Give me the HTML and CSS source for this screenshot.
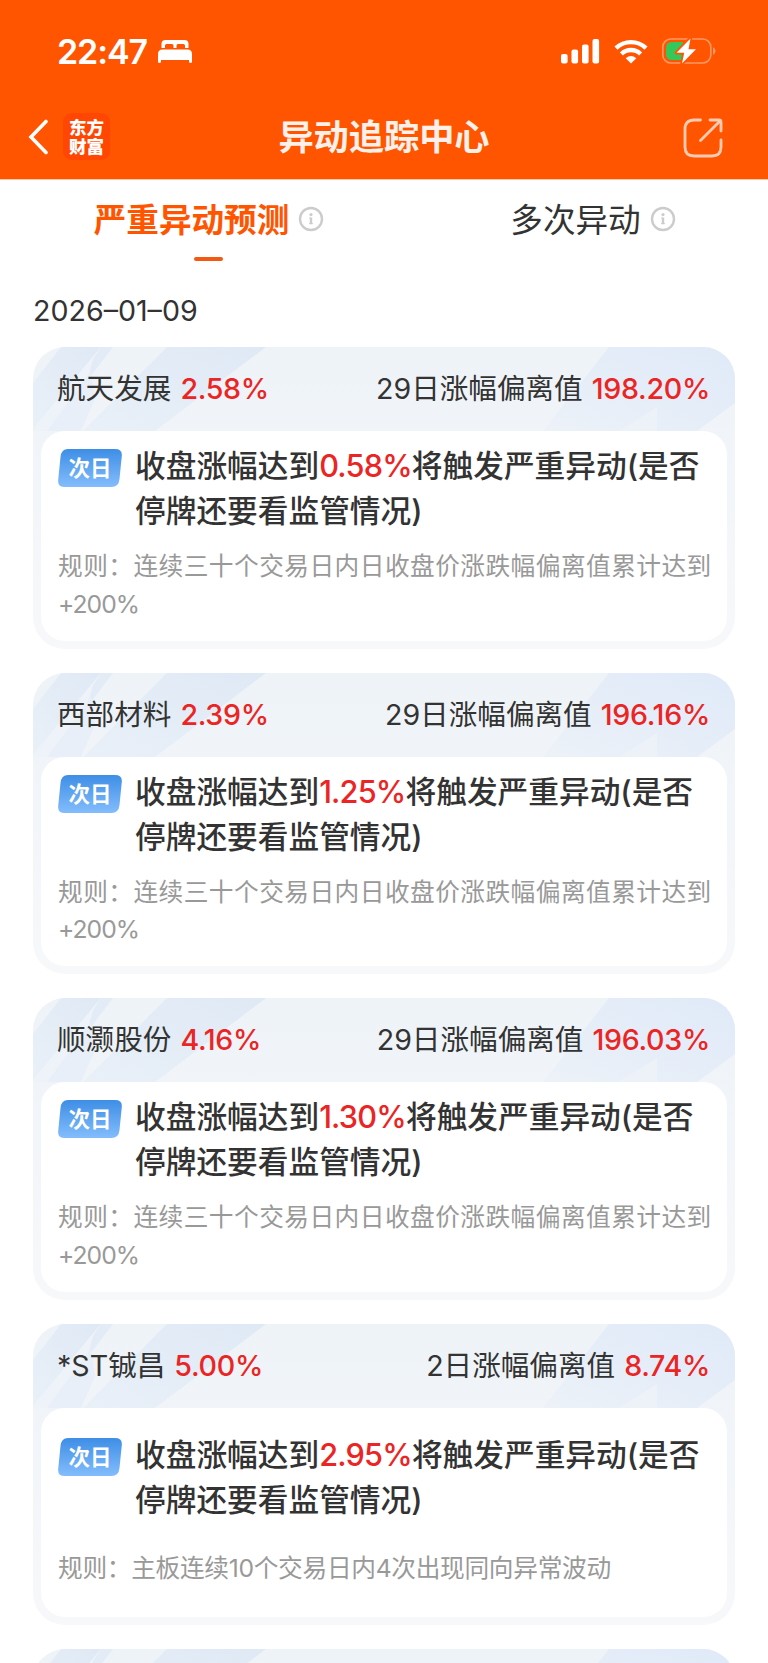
FILE: index.html
```html
<!DOCTYPE html>
<html lang="zh-CN">

<head>
    <meta charset="UTF-8">
    <meta name="viewport" content="width=device-width, initial-scale=1.0">
    <title>异动追踪中心</title>
    <link rel="stylesheet" href="styles.css">
</head>

<body>
    <svg class="defs" width="0" height="0">
        <symbol id="info" viewBox="0 0 26 26">
            <circle cx="13" cy="13" r="11" fill="none" stroke="#cccccc" stroke-width="2.4" />
            <circle cx="13" cy="8.6" r="1.6" fill="#cccccc" />
            <path d="M13 11.600V18" fill="none" stroke="#cccccc" stroke-width="2.400" />
            <path d="M11.400 12.200H13M11.200 17.600H14.800" fill="none" stroke="#cccccc" stroke-width="1.200" />
        </symbol>
        <symbol id="card-bg" viewBox="0 0 702 110">
            <linearGradient id="band-left" x1="1" y1="0" x2="0" y2="1">
                <stop offset="0" stop-color="#dfe9f5" />
                <stop offset="1" stop-color="#e9f0f8" />
            </linearGradient>
            <linearGradient id="band-right" x1="1" y1="0" x2="0" y2="1">
                <stop offset="0" stop-color="#e0eaf8" />
                <stop offset=".5" stop-color="#e5edf8" />
                <stop offset="1" stop-color="#edf2f8" />
            </linearGradient>
            <path d="M28 0H68L0 82V36Z" fill="url(#band-left)" />
            <path d="M68 0L58 24L14 84H0V82Z" fill="#eef3f9" />
            <path d="M68 0H80L54 34L60 12Z" fill="#e2ebf6" />
            <path d="M58 24L14 84H48L62 52Z" fill="#e8eff8" />
            <path d="M134 0H233L122 84H50Z" fill="url(#band-left)" />
            <path d="M576 0H702V56L664 84H510Z" fill="url(#band-right)" />
            <path d="M624 60V84H586Z" fill="#edf2f8" />
        </symbol>
        <symbol id="badge" viewBox="0 0 64 38">
            <linearGradient id="badge-fill" x1="0" y1="0" x2="0" y2="1">
                <stop offset="0" stop-color="#3e8ee6" />
                <stop offset="1" stop-color="#83bdfc" />
            </linearGradient>
            <path d="M10 0H57Q64.500 0 63.800 7L61.500 30Q60.700 38 53.500 38H7Q-.5 38 .2 31L2.500 8Q3.300 0 10 0Z" fill="url(#badge-fill)" />
        </symbol>
    </svg>

    <header class="header">
        <div class="status-bar">
            <div class="status-left">
                <span class="time">22:47</span>
                <svg width="34" height="23" viewBox="0 0 34 23" fill="#fff">
                    <path d="M3.500 8V4Q3.500 0 7.500 0H26.500Q30.500 0 30.500 4V8H27V5.500Q27 4 25.500 4H20Q18.500 4 18.500 5.500V8H15.500V5.500Q15.500 4 14 4H8.500Q7 4 7 5.500V8Z" />
                    <path d="M0 14Q0 9.500 4.500 9.500H29.500Q34 9.500 34 14V21.500Q34 23 32.500 23T31 21.500V20H3V21.500Q3 23 1.500 23T0 21.500Z" />
                </svg>
            </div>
            <div class="status-right">
                <svg width="39" height="25" viewBox="0 0 39 25" fill="#fff">
                    <rect x="0" y="15" width="6.600" height="9.500" rx="2" />
                    <rect x="10.500" y="10.500" width="6.600" height="14" rx="2" />
                    <rect x="21" y="5.500" width="6.600" height="19" rx="2" />
                    <rect x="31.500" y="0" width="6.600" height="24.500" rx="2" />
                </svg>
                <svg class="wifi" width="34" height="25" viewBox="0 0 34 25" fill="none" stroke="#fff" stroke-width="4.400">
                    <path d="M2 9.200A21.500 21.500 0 0 1 32 9.200" />
                    <path d="M7.400 15A13.700 13.700 0 0 1 26.600 15" />
                    <path d="M17 24.500L11.700 19.300Q17 14.800 22.300 19.300Z" fill="#fff" stroke="none" />
                </svg>
                <svg class="battery" width="54" height="28" viewBox="0 0 54 28">
                    <rect x=".8" y="2" width="48" height="24" rx="8" fill="none" stroke="#ff9966" stroke-width="1.600" />
                    <path d="M51 10Q53.500 11.500 53.500 14T51 18Z" fill="#ff9966" />
                    <path d="M10 5H21V23H10Q4 23 4 17V11Q4 5 10 5Z" fill="#34c759" />
                    <path d="M28.500 1.500L14.500 15.800H22.200L20 26.500L34 12.200H26.500Z" fill="#fff" stroke="#ff5500" stroke-width="3.500" stroke-linejoin="round" paint-order="stroke" />
                </svg>
            </div>
        </div>
        <div class="nav-bar">
            <div class="nav-left">
                <svg width="20" height="36" viewBox="0 0 20 36" fill="none" stroke="#fff" stroke-width="3.600" stroke-linecap="round">
                    <path d="M18 2.500L3 18L18 33.500" />
                </svg>
                <div class="logo">东方<br>财富</div>
            </div>
            <h1 class="nav-title">异动追踪中心</h1>
            <svg class="share" width="40" height="40" viewBox="0 0 40 40" fill="none" stroke="#ffccb3" stroke-width="2.800" stroke-linecap="round">
                <path d="M17.500 2H11Q2 2 2 11V29Q2 38 11 38H29Q38 38 38 29V22" />
                <path d="M27 2H36Q38 2 38 4V13M37 3L17.500 22.500" />
            </svg>
        </div>
    </header>

    <nav class="tabs">
        <div class="tab active">
            <span>严重异动预测</span>
            <svg class="info"><use href="#info" /></svg>
        </div>
        <div class="tab">
            <span>多次异动</span>
            <svg class="info"><use href="#info" /></svg>
        </div>
    </nav>

    <main class="content">
        <div class="date">2026–01–09</div>

        <section class="card">
            <svg class="card-bg"><use href="#card-bg" /></svg>
            <div class="card-head">
                <div>航天发展<span class="rate">2.58%</span></div>
                <div>29日涨幅偏离值<span class="rate">198.20%</span></div>
            </div>
            <div class="card-body">
                <div class="notice">
                    <div class="badge"><svg><use href="#badge" /></svg><span>次日</span></div>
                    <p>收盘涨幅达到<b>0.58%</b>将触发严重异动(是否停牌还要看监管情况)</p>
                </div>
                <p class="rule">规则：连续三十个交易日内日收盘价涨跌幅偏离值累计达到<span>+200%</span></p>
            </div>
        </section>

        <section class="card">
            <svg class="card-bg"><use href="#card-bg" /></svg>
            <div class="card-head">
                <div>西部材料<span class="rate">2.39%</span></div>
                <div>29日涨幅偏离值<span class="rate">196.16%</span></div>
            </div>
            <div class="card-body">
                <div class="notice">
                    <div class="badge"><svg><use href="#badge" /></svg><span>次日</span></div>
                    <p>收盘涨幅达到<b>1.25%</b>将触发严重异动(是否停牌还要看监管情况)</p>
                </div>
                <p class="rule">规则：连续三十个交易日内日收盘价涨跌幅偏离值累计达到<span>+200%</span></p>
            </div>
        </section>

        <section class="card">
            <svg class="card-bg"><use href="#card-bg" /></svg>
            <div class="card-head">
                <div>顺灏股份<span class="rate">4.16%</span></div>
                <div>29日涨幅偏离值<span class="rate">196.03%</span></div>
            </div>
            <div class="card-body">
                <div class="notice">
                    <div class="badge"><svg><use href="#badge" /></svg><span>次日</span></div>
                    <p>收盘涨幅达到<b>1.30%</b>将触发严重异动(是否停牌还要看监管情况)</p>
                </div>
                <p class="rule">规则：连续三十个交易日内日收盘价涨跌幅偏离值累计达到<span>+200%</span></p>
            </div>
        </section>

        <section class="card">
            <svg class="card-bg"><use href="#card-bg" /></svg>
            <div class="card-head">
                <div>*ST铖昌<span class="rate">5.00%</span></div>
                <div>2日涨幅偏离值<span class="rate">8.74%</span></div>
            </div>
            <div class="card-body short">
                <div class="notice">
                    <div class="badge"><svg><use href="#badge" /></svg><span>次日</span></div>
                    <p>收盘涨幅达到<b>2.95%</b>将触发严重异动(是否停牌还要看监管情况)</p>
                </div>
                <p class="rule">规则：主板连续10个交易日内4次出现同向异常波动</p>
            </div>
        </section>

        <section class="card">
            <svg class="card-bg"><use href="#card-bg" /></svg>
        </section>
    </main>
</body>

</html>
```
FILE: styles.css
```css
* {
    box-sizing: border-box;
}

body {
    display: flex;
    flex-direction: column;
    margin: 0;
    height: 100vh;
    background-color: #fff;
    color: #333;
    font-family: Inter, "Noto Sans CJK SC", sans-serif;
}

h1,
p {
    margin: 0;
}

.defs {
    position: absolute;
}

.header {
    flex: none;
    height: 180px;
    background-color: #ff5500;
    border-bottom: 1px solid #ffc9a8;
    color: #fff;
}

.status-bar {
    display: flex;
    justify-content: space-between;
    align-items: center;
    height: 102px;
    padding: 0 52px 0 57px;
}

.status-left,
.status-right,
.nav-left {
    display: flex;
    align-items: center;
}

.status-left {
    gap: 11px;
}

.time {
    font-size: 34px;
    font-weight: 600;
    letter-spacing: -1.1px;
}

.wifi {
    margin-left: 14px;
}

.battery {
    margin-left: 14px;
}

.nav-bar {
    display: grid;
    grid-template-columns: 1fr auto 1fr;
    align-items: center;
    height: 69px;
    padding: 0 45px 0 28px;
}

.nav-left {
    gap: 15px;
}

.logo {
    width: 47px;
    height: 47px;
    padding-top: 4px;
    border-radius: 9px;
    background-color: #ff4602;
    font-family: "Noto Sans CJK SC", sans-serif;
    font-size: 17.5px;
    font-weight: 900;
    line-height: 19px;
    text-align: center;
}

.nav-title {
    padding-left: 17px;
    font-size: 35.2px;
    font-weight: 700;
    line-height: 50px;
    color: #fff1ea;
}

.share {
    justify-self: end;
    margin-top: 2px;
}

.tabs {
    display: grid;
    flex: none;
    grid-template-columns: 418px 1fr;
    height: 88px;
}

.tab {
    position: relative;
    display: flex;
    justify-content: center;
    gap: 9px;
    height: 81px;
    padding-top: 17px;
    font-size: 32.6px;
    line-height: 46px;
}

.tab.active {
    color: #ff5500;
    font-weight: 700;
}

.tab.active::after {
    content: "";
    position: absolute;
    left: 194px;
    bottom: 0;
    width: 29px;
    height: 4px;
    border-radius: 2px;
    background-color: #f25a13;
}

.info {
    width: 26px;
    height: 26px;
    margin-top: 9px;
}

.content {
    flex: 1;
    min-height: 0;
    padding: 0 33px;
    overflow: hidden;
}

.date {
    height: 79.3px;
    padding-top: 23px;
    font-size: 28.6px;
    line-height: 40px;
}

.card {
    position: relative;
    height: 301.3px;
    margin-bottom: 24.2px;
    padding: 0 8px 8px;
    border-radius: 32px;
    overflow: hidden;
    background: linear-gradient(#eef3f8, #f7f8fa);
}

.card-bg {
    position: absolute;
    top: 0;
    left: 0;
    width: 702px;
    height: 110px;
}

.card-head {
    position: relative;
    display: flex;
    justify-content: space-between;
    height: 84px;
    padding: 20px 17px 0 16px;
    font-size: 28.6px;
    line-height: 44px;
}

.rate {
    margin-left: 9px;
    color: #eb2424;
    font-weight: 500;
    letter-spacing: -0.3px;
}

.card-body {
    position: relative;
    height: 209.3px;
    padding: 12px 16px 0 17px;
    border-radius: 24px;
    background-color: #fff;
}

.card-body.short {
    padding-top: 24px;
}

.notice {
    display: flex;
    gap: 13px;
}

.notice p {
    flex: 1;
    font-size: 30.7px;
    font-weight: 500;
    line-height: 45px;
}

.notice b {
    color: #eb2424;
    font-weight: 500;
    letter-spacing: -0.8px;
}

.badge {
    position: relative;
    width: 64px;
    height: 38px;
    margin-top: 6px;
    color: #fff;
    font-size: 21.5px;
    font-weight: 700;
    line-height: 38px;
    text-align: center;
}

.badge svg {
    position: absolute;
    top: 0;
    left: 0;
    width: 64px;
    height: 38px;
}

.badge span {
    position: relative;
}

.rule {
    margin-top: 15px;
    color: #999;
    font-size: 24.7px;
    letter-spacing: -0.3px;
    line-height: 37.5px;
    text-align: justify;
}

.rule span {
    letter-spacing: -1px;
}

.short .rule {
    margin-top: 28px;
}
```
